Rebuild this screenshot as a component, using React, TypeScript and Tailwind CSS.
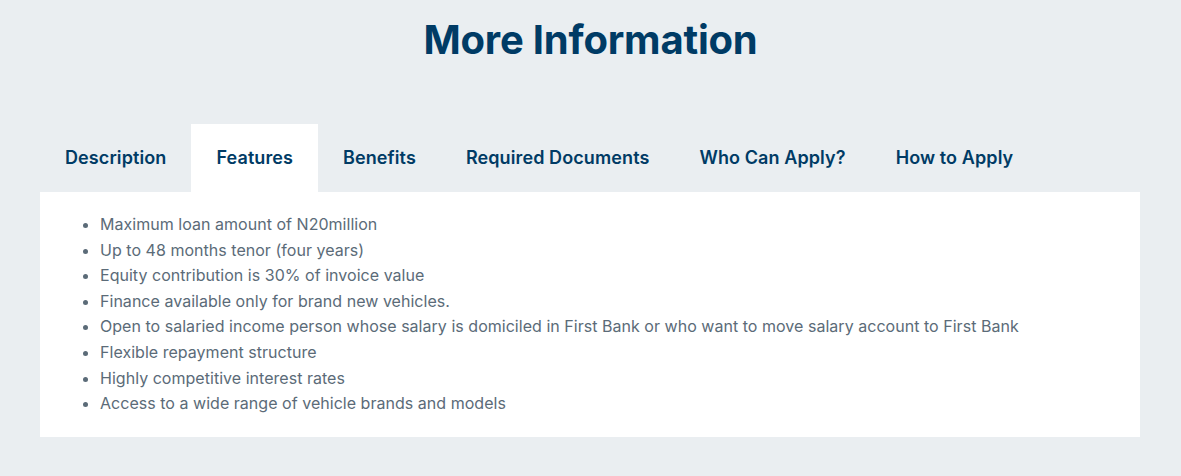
import React, { useState } from 'react';

const tabs = ['Description', 'Features', 'Benefits', 'Required Documents', 'Who Can Apply?', 'How to Apply'];

const features = [
  'Maximum loan amount of N20million',
  'Up to 48 months tenor (four years)',
  'Equity contribution is 30% of invoice value',
  'Finance available only for brand new vehicles.',
  'Open to salaried income person whose salary is domiciled in First Bank or who want to move salary account to First Bank',
  'Flexible repayment structure',
  'Highly competitive interest rates',
  'Access to a wide range of vehicle brands and models',
];

export default function App() {
  const [active, setActive] = useState('Features');

  return (
    <div className="min-h-screen bg-[#eaeef1] font-['Inter','Noto_Sans',sans-serif] pt-4 pb-10">
      <h1 className="text-center text-[40px] leading-[48px] font-bold text-[#003b65] tracking-[-0.2px]">
        More Information
      </h1>

      <div className="ml-10 w-[1100px] mt-[60px]">
        <div className="flex">
          {tabs.map(t => (
            <button
              key={t}
              onClick={() => setActive(t)}
              className={`px-[25px] py-[22px] text-[18px] leading-6 font-semibold tracking-[0.1px] text-[#003b65] ${
                active === t ? 'bg-white' : 'bg-transparent'
              }`}
            >
              {t}
            </button>
          ))}
        </div>

        <div className="bg-white px-5 py-5">
          <ul className="list-disc pl-[40px] text-[16px] leading-[25.6px] tracking-[0.03px] text-[#5b6b78] marker:text-[#5b6b78]">
            {features.map(f => (
              <li key={f}>{f}</li>
            ))}
          </ul>
        </div>
      </div>
    </div>
  );
}
